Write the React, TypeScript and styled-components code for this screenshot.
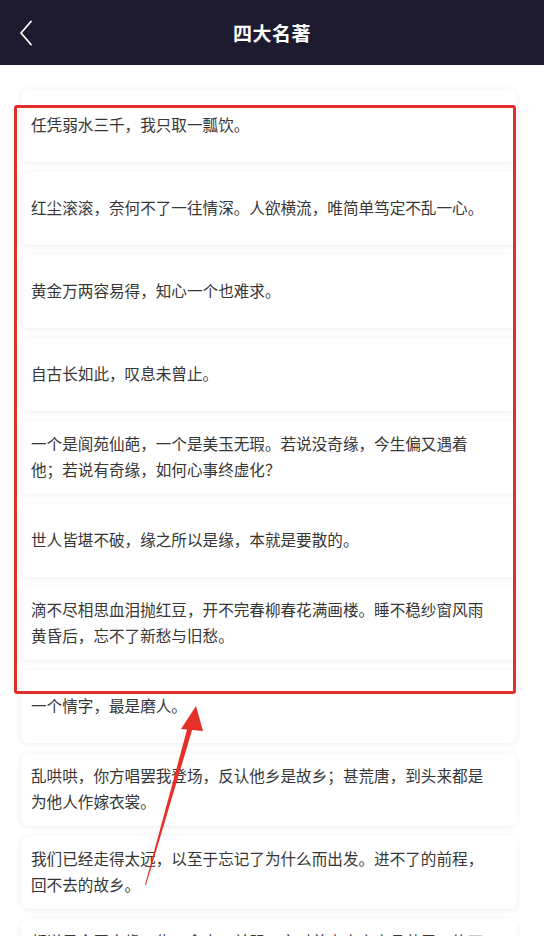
import styled, { createGlobalStyle } from "styled-components";

const GlobalStyle = createGlobalStyle`
  html, body {
    margin: 0;
    padding: 0;
    background: #ffffff;
    overflow: hidden;
  }
  body {
    font-family: "Noto Sans CJK SC", "Noto Sans", sans-serif;
  }
`;

const Page = styled.div`
  position: relative;
  width: 544px;
  height: 951px;
  overflow: hidden;
  background: #ffffff;
  display: flex;
  flex-direction: column;
`;

const NavBar = styled.header`
  height: 65px;
  flex-shrink: 0;
  background: #1e1b31;
  display: grid;
  grid-template-columns: 60px 1fr 60px;
  align-items: center;
`;

const BackButton = styled.button`
  border: none;
  background: none;
  padding: 0 0 0 18px;
  height: 65px;
  display: flex;
  align-items: center;
  cursor: pointer;
`;

const Title = styled.h1`
  margin: 0;
  text-align: center;
  color: #ffffff;
  font-size: 19px;
  font-weight: 700;
  letter-spacing: 0.5px;
`;

const Scroller = styled.main`
  flex: 1;
  overflow: hidden;
`;

const List = styled.ul`
  list-style: none;
  margin: 0;
  padding: 24px 27px 0 21px;
  display: flex;
  flex-direction: column;
  gap: 10px;
`;

const Card = styled.li`
  height: 73px;
  box-sizing: border-box;
  background: #ffffff;
  border-radius: 8px;
  box-shadow: 0 1px 6px rgba(0, 0, 0, 0.07);
  padding: 0 24px 4px 10px;
  display: flex;
  align-items: center;
  flex-shrink: 0;
`;

const Quote = styled.p`
  margin: 0;
  font-size: 15.6px;
  line-height: 26px;
  color: #363636;
`;

const Footer = styled.footer`
  height: 15px;
  flex-shrink: 0;
  background: #ffffff;
`;

const Highlight = styled.div`
  position: absolute;
  left: 14px;
  top: 105px;
  width: 502px;
  height: 589px;
  box-sizing: border-box;
  border: 3px solid #e0302a;
  border-radius: 3px;
  pointer-events: none;
`;

const Pointer = styled.svg`
  position: absolute;
  left: 0;
  top: 0;
  pointer-events: none;
`;

const quotes = [
  "任凭弱水三千，我只取一瓢饮。",
  "红尘滚滚，奈何不了一往情深。人欲横流，唯简单笃定不乱一心。",
  "黄金万两容易得，知心一个也难求。",
  "自古长如此，叹息未曾止。",
  "一个是阆苑仙葩，一个是美玉无瑕。若说没奇缘，今生偏又遇着他；若说有奇缘，如何心事终虚化？",
  "世人皆堪不破，缘之所以是缘，本就是要散的。",
  "滴不尽相思血泪抛红豆，开不完春柳春花满画楼。睡不稳纱窗风雨黄昏后，忘不了新愁与旧愁。",
  "一个情字，最是磨人。",
  "乱哄哄，你方唱罢我登场，反认他乡是故乡；甚荒唐，到头来都是为他人作嫁衣裳。",
  "我们已经走得太远，以至于忘记了为什么而出发。进不了的前程，回不去的故乡。",
  "都说是金玉良缘，俺只念木石前盟。空对着山中高士晶莹雪，终不忘世外仙姝寂寞林。",
];

export default function App() {
  return (
    <Page>
      <GlobalStyle />
      <NavBar>
        <BackButton aria-label="返回">
          <svg width="16" height="26" viewBox="0 0 16 26">
            <path
              d="M13 1.5 L3 13 L13 24.5"
              fill="none"
              stroke="#ffffff"
              strokeWidth="1.8"
              strokeLinecap="round"
              strokeLinejoin="round"
            />
          </svg>
        </BackButton>
        <Title>四大名著</Title>
        <div />
      </NavBar>
      <Scroller>
        <List>
          {quotes.map((q, i) => (
            <Card key={i}>
              <Quote>{q}</Quote>
            </Card>
          ))}
        </List>
      </Scroller>
      <Footer />
      <Highlight />
      <Pointer width="544" height="951" viewBox="0 0 544 951">
        <polygon points="188,726 193,727 146,885 145,885" fill="#e5302a" />
        <polygon points="196,706 181,729 203,731" fill="#e5302a" />
      </Pointer>
    </Page>
  );
}
